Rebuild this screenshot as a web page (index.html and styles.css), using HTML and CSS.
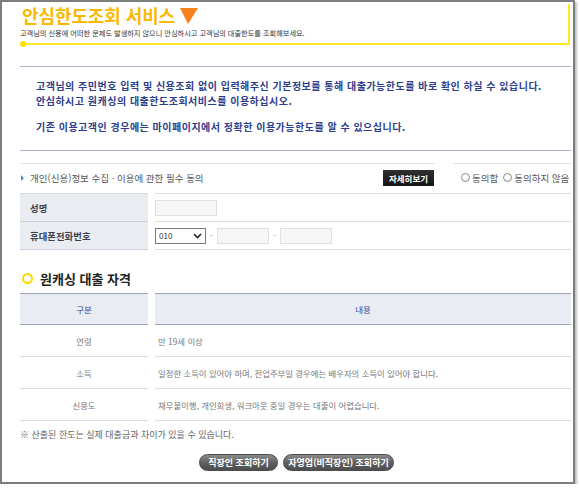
FILE: index.html
```html
<!DOCTYPE html>
<html lang="ko">
<head>
<meta charset="utf-8">
<title>안심한도조회 서비스</title>
<link rel="stylesheet" href="styles.css">
</head>
<body>
<div class="frame">
  <div class="head">
    <h1 class="title">안심한도조회 서비스<svg class="tri" width="18" height="16" viewBox="0 0 18 16"><path d="M0 0 L18 0 L8 16 Z" fill="#f7821d"/></svg></h1>
    <p class="sub">고객님의 신용에 어떠한 문제도 발생하지 않으니 안심하시고 고객님의 대출한도를 조회해보세요.</p>
  </div>

  <div class="intro">
    <p>고객님의 주민번호 입력 및 신용조회 없이 입력해주신 기본정보를 통해 대출가능한도를 바로 확인 하실 수 있습니다.<br>안심하시고 원캐싱의 대출한도조회서비스를 이용하십시오.</p>
    <p class="p2">기존 이용고객인 경우에는 마이페이지에서 정확한 이용가능한도를 알 수 있으십니다.</p>
  </div>

  <div class="consent">
    <div class="consent-main">
      <span class="bullet"></span>
      <span class="ctext">개인(신용)정보 수집 · 이용에 관한 필수 동의</span>
      <button class="detail">자세히보기</button>
    </div>
    <div class="consent-opts">
      <label class="radio"><span class="circle"></span>동의함</label>
      <label class="radio"><span class="circle"></span>동의하지 않음</label>
    </div>
  </div>

  <div class="form">
    <div class="fth">성명</div>
    <div class="ftd"><span class="inp w62"></span></div>
    <div class="fth">휴대폰전화번호</div>
    <div class="ftd">
      <span class="sel">010<svg class="chev" width="9" height="6" viewBox="0 0 9 6"><path d="M1 1 L4.5 4.5 L8 1" fill="none" stroke="#222" stroke-width="1.6"/></svg></span>
      <span class="dash">-</span>
      <span class="inp w52"></span>
      <span class="dash">-</span>
      <span class="inp w52"></span>
    </div>
  </div>

  <h2 class="sec"><span class="ring"></span>원캐싱 대출 자격</h2>

  <div class="qual">
    <div class="qh">구분</div>
    <div class="qh">내용</div>
    <div class="qk">연령</div>
    <div class="qv">만 19세 이상</div>
    <div class="qk">소득</div>
    <div class="qv">일정한 소득이 있어야 하며, 전업주부일 경우에는 배우자의 소득이 있어야 합니다.</div>
    <div class="qk">신용도</div>
    <div class="qv">채무불이행, 개인회생, 워크아웃 중일 경우는 대출이 어렵습니다.</div>
  </div>

  <p class="note">※ 산출된 한도는 실제 대출금과 차이가 있을 수 있습니다.</p>

  <div class="btns">
    <button class="pill w79">직장인 조회하기</button>
    <button class="pill w111">자영업(비직장인) 조회하기</button>
  </div>
</div>
</body>
</html>
```

FILE: styles.css
```css
* { box-sizing: border-box; }
html, body { margin: 0; padding: 0; background: #fff; }
body { font-family: "Noto Sans CJK KR", "Noto Sans", sans-serif; color: #333; }
p, h1, h2 { margin: 0; }

.frame {
  box-sizing: content-box;
  width: 551px;
  height: 480px;
  padding: 0 2px 0 18px;
  border: 2px solid #7d7d7d;
  box-shadow: 2px 2px 2px rgba(0,0,0,0.25);
  overflow: hidden;
}

/* header */
.head {
  position: relative;
  margin-top: 2px;
  width: 550px;
  padding: 0 0 5px 2px;
  border-right: 2px solid #ffe827;
  border-bottom: 2px solid #ffe827;
}
.head::before {
  content: "";
  position: absolute;
  left: 0;
  bottom: -4px;
  width: 6px;
  height: 6px;
  border-radius: 50%;
  background: #ffe20a;
}
.title {
  display: flex;
  align-items: center;
  height: 22px;
  font-size: 18px;
  line-height: 22px;
  font-weight: 700;
  color: #fbb800;
  letter-spacing: -0.1px;
  white-space: nowrap;
}
.tri { margin-left: 5px; margin-top: 1px; }
.sub {
  margin-top: 2px;
  font-size: 7.2px;
  line-height: 10px;
  color: #333;
  white-space: nowrap;
  margin-left: -2px;
}

/* intro */
.intro {
  margin-top: 21px;
  padding: 11px 0 16px 16px;
  border-top: 1px solid #aeb2c6;
  border-bottom: 1px solid #aeb2c6;
  font-size: 10px;
  line-height: 15px;
  font-weight: 700;
  letter-spacing: 0.5px;
  color: #2c3d8c;
  white-space: nowrap;
}
.intro .p2 { margin-top: 11px; }

/* consent */
.consent {
  display: flex;
  gap: 18px;
  margin-top: 12px;
  height: 30px;
  font-size: 9.5px;
  color: #555;
}
.consent-main {
  width: 415px;
  display: flex;
  align-items: center;
  border-top: 1px solid #e2e2e2;
  padding-bottom: 2px;
}
.bullet {
  width: 0; height: 0;
  margin: 0 6px 0 1px;
  border-left: 3px solid #4b8fd6;
  border-top: 3px solid transparent;
  border-bottom: 3px solid transparent;
}
.ctext { flex: 1; white-space: nowrap; }
.detail {
  width: 51px;
  height: 16px;
  margin-right: 1px;
  padding: 0;
  border: 0;
  background: linear-gradient(#2f2f2f, #161616);
  color: #fff;
  font-family: inherit;
  font-size: 8.5px;
  font-weight: 700;
  line-height: 16px;
}
.consent-opts {
  flex: 1;
  display: flex;
  align-items: center;
  border-top: 1px solid #e2e2e2;
  padding: 0 0 2px 8px;
  white-space: nowrap;
  gap: 5px;
}
.radio { display: flex; align-items: center; gap: 2px; }
.circle {
  width: 9px; height: 9px;
  border-radius: 50%;
  border: 1px solid #8a8a8a;
  background: radial-gradient(circle at 50% 40%, #fff 40%, #e6e6e6);
}

/* form table */
.form {
  display: grid;
  grid-template-columns: 128px 1fr;
  column-gap: 7px;
}
.fth, .ftd {
  height: 28px;
  display: flex;
  align-items: center;
  border-bottom: 1px solid #dcdcdc;
}
.form > :nth-child(-n+2) { height: 29px; border-top: 1px solid #dcdcdc; }
.fth {
  background: #e9ecf1;
  border-color: #ccd0da;
  padding-left: 10px;
  font-size: 9.3px;
  font-weight: 700;
  letter-spacing: 0.1px;
  color: #3b3f4e;
}
.inp {
  display: inline-block;
  height: 16px;
  background: #f6f6f6;
  border: 1px solid #e0e0e0;
}
.w62 { width: 62px; }
.w52 { width: 52px; }
.sel {
  width: 51px;
  height: 16px;
  display: inline-flex;
  align-items: center;
  justify-content: space-between;
  padding: 0 3px;
  border: 1px solid #7a7a7a;
  font-size: 8px;
  color: #333;
  background: #fff;
}
.dash {
  width: 11px;
  text-align: center;
  font-size: 8px;
  color: #999;
}

/* section */
.sec {
  margin-top: 18px;
  display: flex;
  align-items: center;
  height: 20px;
  font-size: 13px;
  font-weight: 700;
  color: #222;
  padding-left: 2px;
}
.ring {
  width: 11px; height: 11px;
  border-radius: 50%;
  border: 2.5px solid #ffd700;
  margin-right: 7px;
}

/* qualification table */
.qual {
  margin-top: 5px;
  display: grid;
  grid-template-columns: 128px 1fr;
  column-gap: 7px;
  font-size: 8.4px;
}
.qh {
  height: 32px;
  display: flex;
  align-items: center;
  justify-content: center;
  background: #e9ecf2;
  border-top: 1px solid #9ea3b8;
  border-bottom: 1px solid #9ea3b8;
  color: #3a468c;
  font-size: 8.5px;
}
.qk, .qv {
  height: 32px;
  display: flex;
  align-items: center;
  border-bottom: 1px solid #dddddd;
  color: #777;
  white-space: nowrap;
}
.qk { justify-content: center; }
.qv { padding-left: 3px; }

.note {
  margin-top: 8px;
  font-size: 9px;
  line-height: 12px;
  color: #666;
  white-space: nowrap;
}

.btns {
  margin-top: 13px;
  display: flex;
  justify-content: center;
  gap: 5px;
  padding-left: 2px;
}
.pill {
  height: 17px;
  padding: 0;
  border: 1px solid #4a4a4a;
  border-radius: 9px;
  background: linear-gradient(#8a8a8a, #5e5e5e 55%, #4e4e4e);
  color: #fff;
  font-family: inherit;
  font-size: 9px;
  font-weight: 700;
  line-height: 15px;
  white-space: nowrap;
}
.w79 { width: 79px; }
.w111 { width: 111px; }
```
